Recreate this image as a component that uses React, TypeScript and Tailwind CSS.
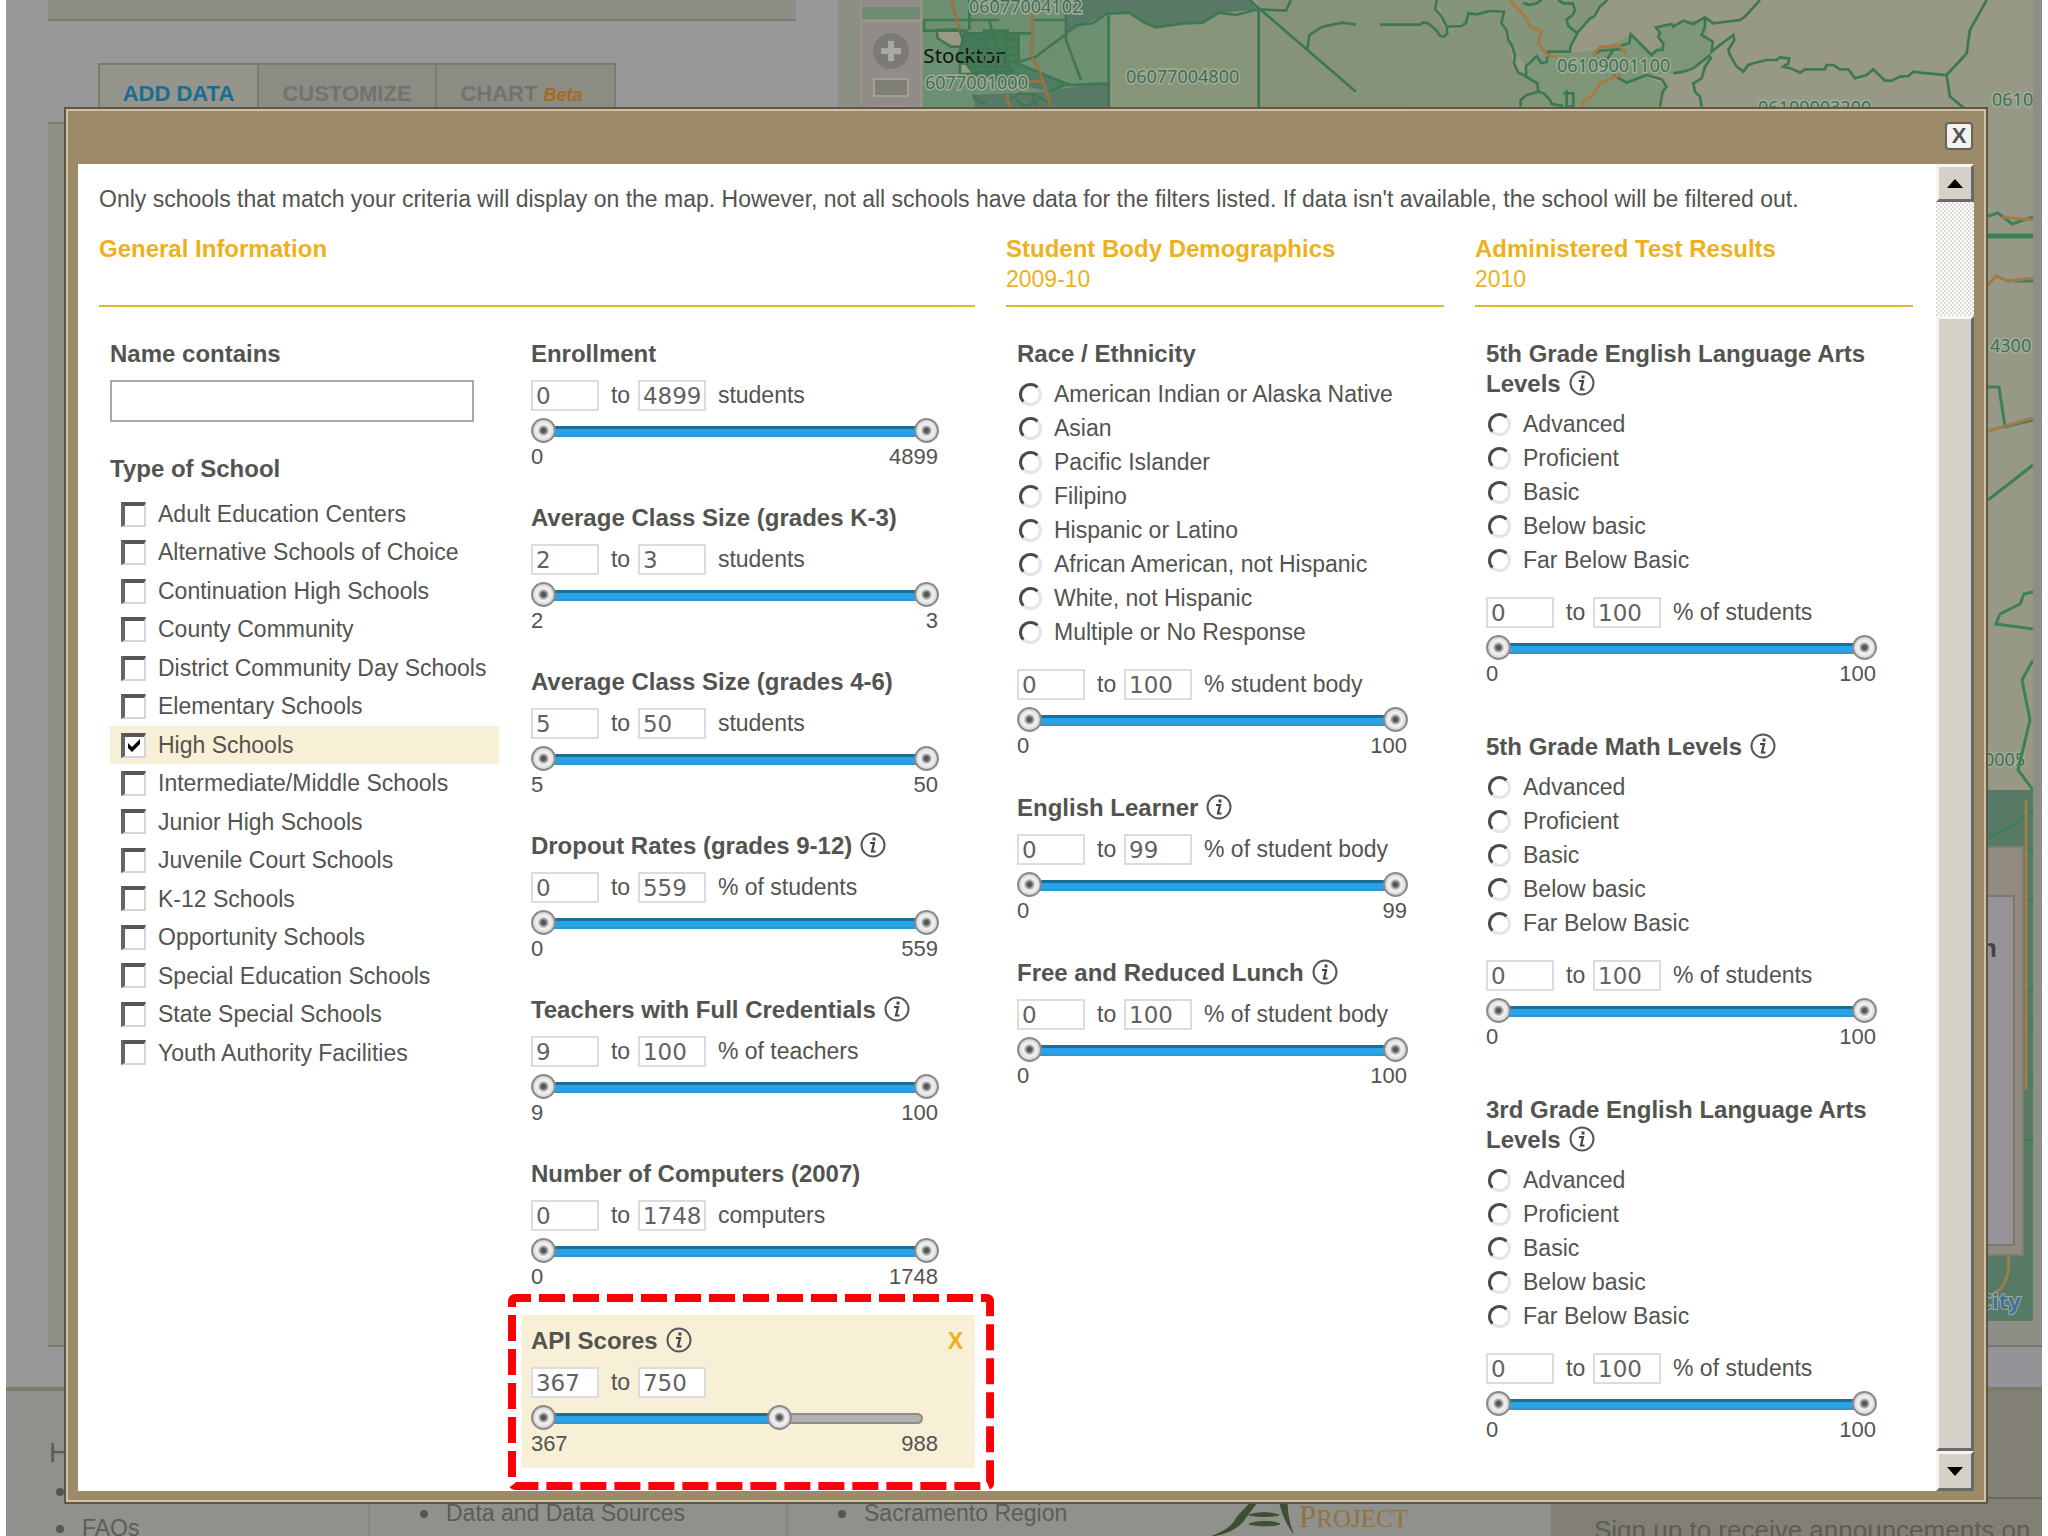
import { useState } from "react";
import type { ReactNode } from "react";

const SCHOOL_TYPES = [
  "Adult Education Centers",
  "Alternative Schools of Choice",
  "Continuation High Schools",
  "County Community",
  "District Community Day Schools",
  "Elementary Schools",
  "High Schools",
  "Intermediate/Middle Schools",
  "Junior High Schools",
  "Juvenile Court Schools",
  "K-12 Schools",
  "Opportunity Schools",
  "Special Education Schools",
  "State Special Schools",
  "Youth Authority Facilities",
];

const RACES = [
  "American Indian or Alaska Native",
  "Asian",
  "Pacific Islander",
  "Filipino",
  "Hispanic or Latino",
  "African American, not Hispanic",
  "White, not Hispanic",
  "Multiple or No Response",
];

const LEVELS = ["Advanced", "Proficient", "Basic", "Below basic", "Far Below Basic"];

const GENERAL_FILTERS = [
  { title: "Enrollment", min: 0, max: 4899, unit: "students" },
  { title: "Average Class Size (grades K-3)", min: 2, max: 3, unit: "students" },
  { title: "Average Class Size (grades 4-6)", min: 5, max: 50, unit: "students" },
  { title: "Dropout Rates (grades 9-12)", min: 0, max: 559, unit: "% of students", info: true },
  { title: "Teachers with Full Credentials", min: 9, max: 100, unit: "% of teachers", info: true },
  { title: "Number of Computers (2007)", min: 0, max: 1748, unit: "computers" },
];

const TESTS = [
  "5th Grade English Language Arts Levels",
  "5th Grade Math Levels",
  "3rd Grade English Language Arts Levels",
];

function InfoIcon() {
  return (
    <svg viewBox="0 0 26 26" className="ml-2 inline-block size-[26px] align-[-4px]" aria-label="More information">
      <circle cx="13" cy="13" r="11.5" fill="none" stroke="#55555a" strokeWidth="2" />
      <path d="M10 11h4l-2 8.5h3.5" fill="none" stroke="#44444a" strokeWidth="2.2" />
      <rect x="12.5" y="5.5" width="3" height="3" fill="#44444a" />
    </svg>
  );
}

function FilterTitle({ children, info }: { children: ReactNode; info?: boolean }) {
  return (
    <h3 className="text-[24px] leading-[30px] font-bold">
      {children}
      {info && <InfoIcon />}
    </h3>
  );
}

const NUMBER_BOX =
  "h-[31px] w-[68px] border-2 border-[#dcdcde] bg-white pl-[3px] font-['DejaVu_Sans'] text-[23px] leading-[27px] text-[#62625f] outline-none";

const THUMB =
  "pointer-events-none absolute inset-0 h-[25px] w-full appearance-none bg-transparent outline-none [&::-webkit-slider-thumb]:pointer-events-auto [&::-webkit-slider-thumb]:size-[25px] [&::-webkit-slider-thumb]:appearance-none [&::-webkit-slider-thumb]:rounded-full [&::-webkit-slider-thumb]:border-2 [&::-webkit-slider-thumb]:border-[#8b8b8b] [&::-webkit-slider-thumb]:bg-[radial-gradient(circle,#555_0_2px,#a8a8a8_4px,#f4f4f4_6px,#e2e2e2_9px,#b8b8b8_12px)]";

type RangeProps = { label: string; min: number; max: number; high?: number; unit?: string };

function RangeFilter({ label, min, max, high = max, unit }: RangeProps) {
  const [from, setFrom] = useState(min);
  const [to, setTo] = useState(high);
  const share = (v: number) => (v - min) / (max - min);

  return (
    <div>
      <div className="flex items-center text-[23px] leading-[31px]">
        <input
          className={NUMBER_BOX}
          aria-label={`${label} from`}
          value={from}
          onChange={(e) => setFrom(Number(e.target.value) || min)}
        />
        <span className="w-[39px] pl-3">to</span>
        <input
          className={NUMBER_BOX}
          aria-label={`${label} to`}
          value={to}
          onChange={(e) => setTo(Number(e.target.value) || max)}
        />
        {unit && <span className="pl-3">{unit}</span>}
      </div>
      <div className="relative mt-[7px] flex h-[25px] items-center pr-4 pl-3">
        <div className="mt-0.5 h-[11px] w-full rounded-r-md border-2 border-[#8c8c82] bg-[#b3b0b0]" />
        <div
          className="absolute top-2 h-[11px] border-t-3 border-b-2 border-t-[#1a6f94] border-b-[#2f96cf] bg-[#29a3e8]"
          style={{
            left: `calc(12px + (100% - 25px) * ${share(from)})`,
            width: `calc((100% - 25px) * ${share(to) - share(from)})`,
          }}
        />
        <input
          type="range"
          className={THUMB}
          aria-label={`${label} minimum`}
          min={min}
          max={max}
          value={from}
          onChange={(e) => setFrom(Math.min(Number(e.target.value), to))}
        />
        <input
          type="range"
          className={THUMB}
          aria-label={`${label} maximum`}
          min={min}
          max={max}
          value={to}
          onChange={(e) => setTo(Math.max(Number(e.target.value), from))}
        />
      </div>
      <div className="flex justify-between pr-px text-[22px] leading-[28px]">
        <span>{min}</span>
        <span>{max}</span>
      </div>
    </div>
  );
}

function RadioList({ name, options }: { name: string; options: string[] }) {
  return (
    <div className="mt-2 mb-5">
      {options.map((option) => (
        <label key={option} className="flex h-[34px] items-center gap-3 pl-0.5 text-[23px]">
          <input
            type="radio"
            name={name}
            className="size-[23px] appearance-none rounded-full border-3 border-t-[#4a4a4e] border-r-[#e6e4e4] border-b-[#e6e4e4] border-l-[#4a4a4e] bg-white checked:bg-[radial-gradient(#222_0_4px,#fff_5px)]"
          />
          {option}
        </label>
      ))}
    </div>
  );
}

function SchoolTypes() {
  const [checked, setChecked] = useState<string[]>(["High Schools"]);
  const toggle = (t: string) =>
    setChecked((list) => (list.includes(t) ? list.filter((x) => x !== t) : [...list, t]));

  return (
    <div className="mt-[11px] grid h-[577px] auto-rows-fr">
      {SCHOOL_TYPES.map((type) => {
        const on = checked.includes(type);
        return (
          <label key={type} className={`flex items-center gap-3 pl-[11px] text-[23px] ${on ? "bg-[#f7efd6]" : ""}`}>
            <span className="relative size-[25px]">
              <input
                type="checkbox"
                checked={on}
                onChange={() => toggle(type)}
                className="block size-[25px] appearance-none border-t-4 border-r-2 border-b-2 border-l-4 border-t-[#55555a] border-r-[#d6d4d6] border-b-[#d6d4d6] border-l-[#66666a] bg-white"
              />
              {on && (
                <svg viewBox="0 0 25 25" className="pointer-events-none absolute inset-0">
                  <path d="M7 10l4 4 8-8v5l-8 8-4-4z" fill="#000" />
                </svg>
              )}
            </span>
            {type}
          </label>
        );
      })}
    </div>
  );
}

function SectionHead({ title, year }: { title: string; year?: string }) {
  return (
    <header className="mb-8 h-[73px] border-b-2 border-[#e3b62f] leading-[30px] text-[#edb120]">
      <h2 className="text-[24px] font-bold">{title}</h2>
      {year && <p className="text-[23px]">{year}</p>}
    </header>
  );
}

function Scrollbar() {
  const face = "border-3 border-t-[#f6f5f2] border-r-[#6a6a6a] border-b-[#6a6a6a] border-l-[#f6f5f2] bg-[#d4d1c9]";
  return (
    <div className="flex w-[38px] shrink-0 flex-col bg-[conic-gradient(#dedbd6_25%,#fff_0_50%,#dedbd6_0_75%,#fff_0)] bg-[length:4px_4px]">
      <button type="button" aria-label="Scroll up" className={`flex h-[38px] items-center justify-center ${face}`}>
        <svg viewBox="0 0 16 9" className="h-[9px] w-4">
          <path d="M8 0l8 9H0z" />
        </svg>
      </button>
      <div className={`mt-[114px] flex-1 ${face}`} />
      <button type="button" aria-label="Scroll down" className={`flex h-[40px] items-center justify-center ${face}`}>
        <svg viewBox="0 0 16 9" className="h-[9px] w-4">
          <path d="M8 9l8-9H0z" />
        </svg>
      </button>
    </div>
  );
}

function ApiScores() {
  const [open, setOpen] = useState(true);
  if (!open) return null;
  return (
    <div className="relative -mt-2 bg-[#f7efd6] pt-[11px] pr-9 pb-[10px] pl-[9px]">
      <div className="-mr-6 flex items-center justify-between pb-[11px]">
        <FilterTitle info>API Scores</FilterTitle>
        <button
          type="button"
          aria-label="Clear API scores"
          onClick={() => setOpen(false)}
          className="text-[23px] leading-[30px] font-bold text-[#edb120]"
        >
          X
        </button>
      </div>
      <RangeFilter label="API Scores" min={367} max={988} high={750} />
      {/* callout frame around the active filter */}
      <svg className="pointer-events-none absolute -top-[21px] -left-[14px] h-[calc(100%+43px)] w-[calc(100%+33px)]">
        <rect
          x="4"
          y="4"
          rx="3"
          className="h-[calc(100%-8px)] w-[calc(100%-8px)]"
          fill="none"
          stroke="#fb0007"
          strokeWidth="8"
          strokeDasharray="26 8"
          strokeDashoffset="10"
        />
      </svg>
    </div>
  );
}

function FilterDialog() {
  return (
    <section
      role="dialog"
      aria-label="School filters"
      className="absolute top-[107px] right-[60px] left-[64px] border-2 border-[#5c574b] bg-[#9c8a68]"
    >
      <div className="border-2 border-[#cfc1a2] px-[10px] pb-[9px]">
        <div className="flex h-[53px] items-start justify-end pt-[11px] pr-px">
          <button
            type="button"
            aria-label="Close"
            className="flex size-[28px] items-center justify-center rounded-sm border-2 border-[#6b6250] bg-[#f3f2f2] text-[22px] leading-none font-bold text-[#555]"
          >
            X
          </button>
        </div>
        <div className="flex bg-white">
          <div className="min-w-0 flex-1 pt-5 pr-[23px] pb-[23px] pl-[21px]">
            <p className="mb-5 text-[23px] leading-[30px]">
              Only schools that match your criteria will display on the map. However, not all schools have data for the
              filters listed. If data isn't available, the school will be filtered out.
            </p>
            <div className="grid grid-cols-[2fr_1fr_1fr] gap-x-[31px]">
              <div>
                <SectionHead title="General Information" />
                <div className="grid grid-cols-[14fr_15fr]">
                  <div className="pr-[23px] pl-[11px]">
                    <label htmlFor="school-name" className="block pb-[11px] text-[24px] leading-[30px] font-bold">
                      Name contains
                    </label>
                    <input
                      id="school-name"
                      className="mb-8 block h-[42px] w-[364px] border-2 border-[#a9a9a9] px-2 text-[23px] outline-none"
                    />
                    <FilterTitle>Type of School</FilterTitle>
                    <SchoolTypes />
                  </div>
                  <div>
                    {GENERAL_FILTERS.map((f) => (
                      <div key={f.title} className="flex h-[164px] flex-col gap-[11px] pr-9 pl-[9px]">
                        <FilterTitle info={f.info}>{f.title}</FilterTitle>
                        <RangeFilter label={f.title} min={f.min} max={f.max} unit={f.unit} />
                      </div>
                    ))}
                    <ApiScores />
                  </div>
                </div>
              </div>

              <div>
                <SectionHead title="Student Body Demographics" year="2009-10" />
                <div className="flex flex-col gap-[33px] pr-9 pl-[11px]">
                  <div>
                    <FilterTitle>Race / Ethnicity</FilterTitle>
                    <RadioList name="race" options={RACES} />
                    <RangeFilter label="Race" min={0} max={100} unit="% student body" />
                  </div>
                  <div className="flex flex-col gap-[11px]">
                    <FilterTitle info>English Learner</FilterTitle>
                    <RangeFilter label="English Learner" min={0} max={99} unit="% of student body" />
                  </div>
                  <div className="flex flex-col gap-[11px]">
                    <FilterTitle info>Free and Reduced Lunch</FilterTitle>
                    <RangeFilter label="Free and Reduced Lunch" min={0} max={100} unit="% of student body" />
                  </div>
                </div>
              </div>

              <div>
                <SectionHead title="Administered Test Results" year="2010" />
                <div className="flex flex-col gap-11 pr-9 pl-[11px]">
                  {TESTS.map((test) => (
                    <div key={test}>
                      <FilterTitle info>{test}</FilterTitle>
                      <RadioList name={test} options={LEVELS} />
                      <RangeFilter label={test} min={0} max={100} unit="% of students" />
                    </div>
                  ))}
                </div>
              </div>
            </div>
          </div>
          <Scrollbar />
        </div>
      </div>
    </section>
  );
}

function TractMap() {
  return (
    <svg viewBox="0 0 1111 1321" preserveAspectRatio="xMinYMin slice" className="h-[1321px] min-w-0 flex-1" fontFamily="Noto Sans">
      <rect width="1111" height="1321" fill="#979885" />
      <rect x="1060" y="790" width="51" height="531" fill="#567a66" />
      {/* west half, tripled units */}
      <g transform="translate(-86) scale(.3333)" fill="none" stroke="#3d7852" strokeWidth="8">
        <path d="M260 0H820V330H260z" fill="#6d8f72" stroke="none" />
        <path d="M690 0H1250L1260 28 1200 45 1150 40 1100 68 950 80 880 40 810 42 690 100z" fill="#587966" stroke="none" />
        <path d="M818 40L880 40 950 80 1100 68 1150 40 1266 28V330H818z" fill="#87957a" stroke="none" />
        <path d="M1266 0H1720V330H1266z" fill="#86937a" stroke="none" />
        <path d="M640 275L740 255 816 250V330H420L410 285z" fill="#587966" stroke="none" />
        <path d="M530 185L700 255 640 275 530 250z" fill="#4f7d62" stroke="none" />
        <path d="M302 90L370 88 388 140 345 140 305 115zM372 190H410L420 222H372z" fill="#9b9a85" />
        <path d="M385 100H548V185H520L540 250 420 230 390 190 365 180z" fill="#487a5a" />
        <text x="262" y="188" fontSize="62" fill="#111" stroke="none">
          Stockton
        </text>
        <path d="M264 60H490M264 60V92H390L400 110M400 0V90M440 92H515V120M460 60L475 120M515 100H590M595 60H690V0M690 60V120L735 240M548 185L600 170 680 110 720 75 770 70 810 42 880 38 925 68 960 82 1040 70 1100 68 1150 38 1200 45 1266 28M818 40V330M1268 28V330M1240 0L1560 275M1266 28L1350 32 1365 0M530 185L700 255 815 250M640 275L700 250M410 285L430 305 450 310M1414 150L1420 105 1460 80 1520 68 1560 74" />
        <path d="M385 120H548M400 145H548M390 165H548M420 100V230M450 95V220M480 110V225M510 110V230M400 200H530M420 215H530M520 300L550 280 600 285 640 310M540 300L570 320M590 290L600 325M560 325L620 290" strokeWidth="6" />
        <path d="M345 0L372 90M590 0L588 170 612 215 645 320M580 245H620M512 280L520 320" stroke="#9a7140" />
      </g>
      {/* east half, tripled units */}
      <g transform="translate(478) scale(.3333)" fill="none" stroke="#3d7852" strokeWidth="8">
        <path d="M-50 0H110L104 28 140 100 200 70 310 38 340 200 375 230 415 275 362 320H-50z" fill="#86937a" stroke="none" />
        <path d="M110 0H610L530 100 510 155 440 190 380 200 340 150 310 38 200 70 140 80z" fill="#849679" stroke="none" />
        <path d="M375 230L400 170 600 150 690 105 755 165 790 130 770 80 915 55 935 170 915 185 830 220 730 225 800 260 780 320H362L415 275z" fill="#809678" stroke="none" />
        <path d="M-60 74H0L60 74 70 67 85 70 112 94 118 106 132 110 142 100 140 80 185 78 198 68 205 40 230 43 270 33 312 35 304 70 320 90 325 120 335 135 345 165 342 190 355 218 378 228 378 198 392 186 410 168 424 190 440 186 445 155H510L512 138 535 95 570 55 582 50 600 20 622 0M110 0L106 28 125 50 140 80M370 8L385 15 410 10 425 0M475 0L490 10 518 10 525 30 518 45 500 58 505 78 530 98M375 228L412 250 415 275 380 285 362 300V325M415 275L432 280 450 300 455 312 490 318M500 270V320H520V280H490M580 165L600 152 660 148 660 138 688 130 692 102 755 165 770 150 788 150 790 130 775 112 780 98 768 82 815 72 820 80 850 62 880 72 915 52 915 80 905 105 938 125 935 155 960 135 1000 105 1003 120 985 150 990 165 1010 200 1030 215 1045 195 1060 190 1100 180 1130 180 1140 172 1168 175 1165 190 1150 200 1175 206 1200 218 1215 208 1275 208 1280 195 1300 195 1320 208 1345 208 1365 235 1400 225 1420 208 1455 242 1475 242 1500 230 1525 228 1540 215 1560 218 1640 225 1700 160 1710 90 1760 0M640 150L620 180M820 220L850 215 880 205 930 165M915 52L940 70 1020 60 1035 50 1080 0M935 170L915 200 905 235 880 250 885 275 900 290 905 320M640 225L680 248 740 225 785 238 800 260 788 275 780 320M1640 225L1650 290 1700 330" />
        <path d="M330 0L375 50 390 80 425 95 415 130 440 165 470 170M580 165L600 140 660 138 680 165M660 225L600 250 580 285 550 305 548 320" stroke="#a87947" strokeWidth="9" />
      </g>
      <g fontSize="18" fill="#3d7057" stroke="#a3ad97" strokeWidth="3" paintOrder="stroke">
        <text x="47" y="13">06077004102</text>
        <text x="3" y="89">6077001000</text>
        <text x="204" y="83">06077004800</text>
        <text x="635" y="72">06109001100</text>
        <text x="836" y="114">06109003200</text>
        <text x="1070" y="106">0610</text>
        <text x="1068" y="352">4300</text>
        <text x="1062" y="766">0005</text>
      </g>
      <g fill="none" stroke="#3d8058" strokeWidth="3">
        <path d="M1066 236H1111" strokeWidth="5" />
        <path d="M1066 216L1076 213 1090 224 1111 217M1092 281H1111M1066 387H1077L1083 427 1111 420M1066 500L1111 465M1111 592L1102 594 1098 604 1078 614 1074 624 1111 629M1111 660L1100 680 1108 720 1096 770 1111 790M1066 838L1090 826 1111 810" />
        <path d="M1102 850H1111M1104 900H1111M1102 990H1111M1102 1024H1111M1102 1080H1111M1102 1140H1111" />
        <path d="M1080 217L1111 220M1066 285L1074 276 1086 281 1111 278M1066 431L1111 418M1104 800V1090M1086 1250C1090 1280 1080 1290 1066 1298" stroke="#a07c48" />
      </g>
      <text x="1056" y="1309" fontSize="22" fontWeight="700" fill="#3e74a0" stroke="#a3ad97" strokeWidth="2" paintOrder="stroke">
        City
      </text>
    </svg>
  );
}

function MapPane() {
  return (
    <div className="relative flex-1 bg-[#8d8e86]">
      <div className="flex h-[1321px] pr-[9px] pl-[22px]">
        <div className="w-[62px] shrink-0 border-x-2 border-[#9b9384] bg-[#918c88]">
          <div className="mt-[7px] mb-px h-3 bg-[#6d8b72]" />
          <div className="flex flex-col items-center gap-[9px] border-t-2 border-[#a09889] pt-[11px]">
            <button type="button" aria-label="Zoom in">
              <svg viewBox="0 0 36 36" className="size-9">
                <circle cx="18" cy="18" r="18" fill="#7b7a77" />
                <path d="M15 8h6v7h7v6h-7v7h-6v-7H8v-6h7z" fill="#aaa8a5" />
              </svg>
            </button>
            <div className="h-[19px] w-9 border-2 border-[#a5a096] bg-[#807f74]" />
            <div className="h-4 w-9 bg-[#9c9a99]" />
          </div>
        </div>
        <TractMap />
      </div>
      <div className="absolute top-[846px] right-[18px] h-[410px] w-[320px] border-2 border-[#827c6e] bg-[#928b80] px-[7px] pt-[47px] pb-2">
        <div className="h-full border-2 border-[#7d786c] bg-[#969498] pt-8 pr-4 text-right text-[26px] font-bold text-[#444]">
          Population
        </div>
      </div>
      <div className="mt-6 h-[42px] border-t-2 border-[#77766e] bg-[#949398]" />
    </div>
  );
}

function DimmedPage() {
  const item = "flex h-[37px] items-center gap-[18px] pl-[50px] before:size-2 before:rounded-full before:bg-[#555]";
  return (
    <div className="mx-[6px] h-full overflow-hidden bg-[#989898] text-[23px] text-[#5c5c58]">
      <div className="flex h-[1387px]">
        <div className="flex w-[41%] flex-col pr-[42px] pl-[42px]">
          <div className="h-[21px] border-b-2 border-[#7c7b70] bg-[#8c8d84]" />
          <div className="mt-[42px] ml-[50px] flex h-[59px] w-[518px] border-2 border-b-0 border-[#7a7a71] bg-[#8b8c84] text-[22px] font-bold text-[#72726e]">
            <button type="button" className="w-[157px] bg-[#94958c] text-[#1a6c92]">ADD DATA</button>
            <button type="button" className="w-[180px] border-x-2 border-[#7a7a71]">CUSTOMIZE</button>
            <button type="button" className="flex-1 pr-2">
              CHART <span className="text-[18px] text-[#a8691c] italic">Beta</span>
            </button>
          </div>
          <div className="mb-10 flex-1 border-y-2 border-[#7c7b70] bg-[#8e8f87]" />
        </div>
        <MapPane />
      </div>
      <div className="flex h-[160px] border-t-4 border-[#7d7b6c] bg-[#90918d]">
        <div className="w-[364px] border-r-2 border-[#85857b] pt-[42px]">
          <h2 className="h-10 pl-[43px] text-[28px] leading-10">Help</h2>
          <ul>
            <li className={item}><a href="#contact">Contact</a></li>
            <li className={item}><a href="#faqs">FAQs</a></li>
          </ul>
        </div>
        <ul className="w-[418px] border-r-2 border-[#85857b] pt-[104px]">
          <li className={item}><a href="#sources">Data and Data Sources</a></li>
        </ul>
        <div className="flex flex-1 items-start gap-1 pt-[104px]">
          <ul className="w-[415px]">
            <li className={item}><a href="#region">Sacramento Region</a></li>
          </ul>
          <svg viewBox="0 0 88 50" className="h-[50px] w-[88px] shrink-0 overflow-visible" fill="#3e5033">
            <path d="M44 6C36 16 30 20 28 25 22 34 12 38 2 42 16 40 28 36 36 27L50 8z" />
            <path d="M42 20c8-3 22-3 30 0-8 2-22 2-30 0zM42 29c8-3 22-4 31 0-9 3-24 2-31 0zM72 4h8c0 10 1 22 6 34C79 28 74 16 72 4z" stroke="#3e5033" />
          </svg>
          <span className="font-['Liberation_Serif'] text-[31px] leading-[44px] text-[#92713c]">
            P<span className="text-[25px]">ROJECT</span>
          </span>
        </div>
        <div className="w-[491px] bg-[#827f75] pt-[106px]">
          <p className="overflow-hidden border-t-2 border-[#6a675c] pt-[12px] pl-[43px] text-[26px] whitespace-nowrap">
            Sign up to receive announcements on
          </p>
        </div>
      </div>
    </div>
  );
}

export default function App() {
  return (
    <main className="relative h-screen overflow-hidden bg-white font-['Liberation_Sans',Arial,sans-serif] text-[#53534f]">
      <DimmedPage />
      <FilterDialog />
    </main>
  );
}
